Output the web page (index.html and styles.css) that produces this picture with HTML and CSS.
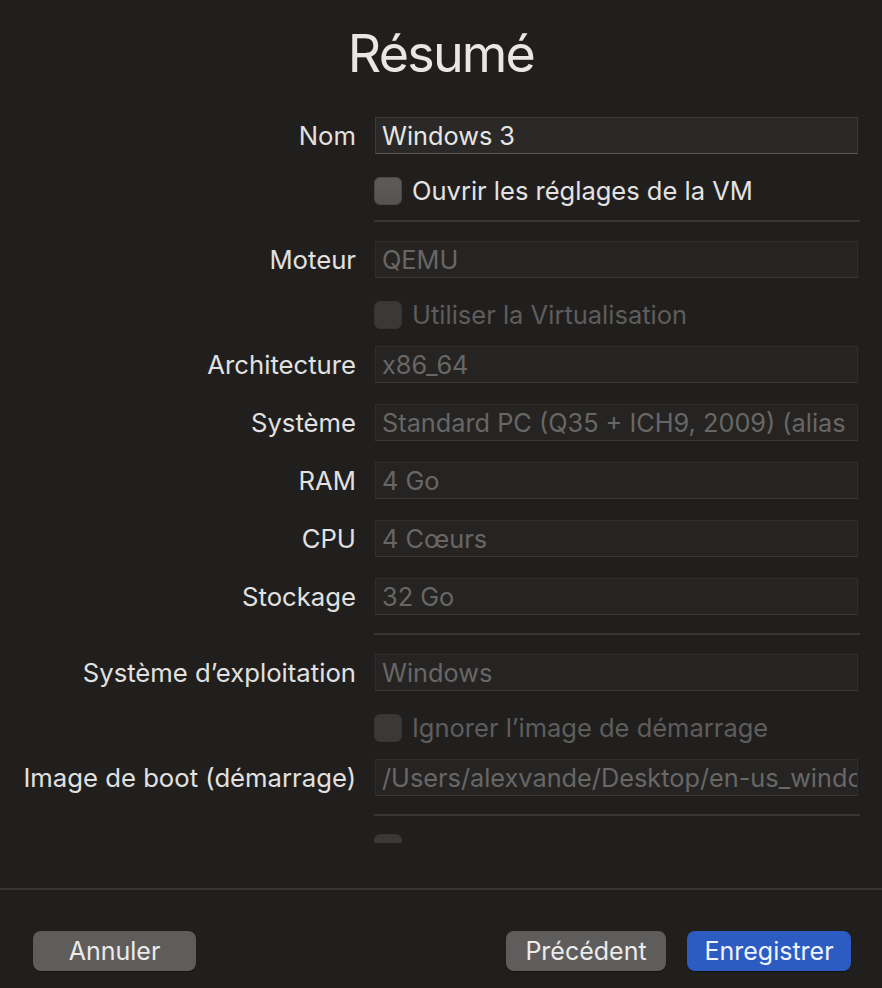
FILE: index.html
```html
<!DOCTYPE html>
<html lang="fr">
<head>
<meta charset="utf-8">
<link rel="stylesheet" href="styles.css">
</head>
<body>
<div class="window">
  <header class="header"><h1 class="title">Résumé</h1></header>
  <div class="content">
    <div class="form">
      <div class="row field-row">
        <div class="label">Nom</div>
        <div class="field editable">Windows 3</div>
      </div>
      <div class="row check-row">
        <div class="label"></div>
        <div class="check"><span class="box"></span><span class="check-text">Ouvrir les réglages de la VM</span></div>
      </div>
      <div class="row sep-row"><div></div><div class="sep"></div></div>
      <div class="row field-row">
        <div class="label">Moteur</div>
        <div class="field">QEMU</div>
      </div>
      <div class="row check-row">
        <div class="label"></div>
        <div class="check disabled"><span class="box"></span><span class="check-text">Utiliser la Virtualisation</span></div>
      </div>
      <div class="row field-row">
        <div class="label">Architecture</div>
        <div class="field">x86_64</div>
      </div>
      <div class="row field-row">
        <div class="label">Système</div>
        <div class="field">Standard PC (Q35 + ICH9, 2009) (alias</div>
      </div>
      <div class="row field-row">
        <div class="label">RAM</div>
        <div class="field">4 Go</div>
      </div>
      <div class="row field-row">
        <div class="label">CPU</div>
        <div class="field">4 Cœurs</div>
      </div>
      <div class="row field-row">
        <div class="label">Stockage</div>
        <div class="field">32 Go</div>
      </div>
      <div class="row sep-row"><div></div><div class="sep"></div></div>
      <div class="row field-row">
        <div class="label">Système d’exploitation</div>
        <div class="field">Windows</div>
      </div>
      <div class="row check-row">
        <div class="label"></div>
        <div class="check disabled"><span class="box"></span><span class="check-text">Ignorer l’image de démarrage</span></div>
      </div>
      <div class="row field-row">
        <div class="label">Image de boot (démarrage)</div>
        <div class="field">/Users/alexvande/Desktop/en-us_windo</div>
      </div>
      <div class="row sep-row"><div></div><div class="sep"></div></div>
      <div class="row check-row">
        <div class="label"></div>
        <div class="check disabled"><span class="box"></span></div>
      </div>
    </div>
  </div>
  <footer class="footer">
    <button class="btn">Annuler</button>
    <div class="btn-group">
      <button class="btn">Précédent</button>
      <button class="btn primary">Enregistrer</button>
    </div>
  </footer>
</div>
</body>
</html>
```
FILE: styles.css
```css
html, body {
  margin: 0;
  padding: 0;
  background: #201f1e;
}
body {
  font-family: Inter, "Noto Sans", "Liberation Sans", sans-serif;
  color: #e4e3e2;
  width: 882px;
  height: 988px;
  overflow: hidden;
}
.window {
  display: flex;
  flex-direction: column;
  height: 988px;
}
.header {
  height: 100px;
  display: flex;
  justify-content: center;
}
.title {
  margin: 22px 0 0 0;
  font-size: 52px;
  font-weight: 400;
  line-height: 64px;
  color: #e8e7e6;
  letter-spacing: -1.8px;
}
.content {
  height: 743px;
  overflow: hidden;
}
.form {
  display: flex;
  flex-direction: column;
  padding-top: 17px;
}
.row {
  display: grid;
  grid-template-columns: 356px 484px;
  column-gap: 18px;
  align-items: center;
}
.field-row { height: 37px; }
.check-row { height: 28px; }
.sep-row { height: 2px; }
.field-row + .field-row { margin-top: 21px; }
.field-row + .check-row { margin-top: 21px; }
.check-row + .field-row { margin-top: 19px; }
.check-row + .sep-row { margin-top: 17px; }
.field-row + .sep-row { margin-top: 18px; }
.sep-row + .field-row { margin-top: 19px; }
.sep-row + .check-row { margin-top: 18px; }
.label {
  text-align: right;
  font-size: 25.7px;
  color: #e2e1e0;
  white-space: nowrap;
}
.field {
  height: 37px;
  box-sizing: border-box;
  padding: 0 6px;
  font-size: 25.3px;
  line-height: 35px;
  white-space: nowrap;
  overflow: hidden;
  color: #686766;
  background: #252423;
  border: 1px solid #2f2e2d;
  border-bottom-color: #393837;
  margin-left: 1px;
}
.field.editable {
  color: #e6e5e4;
  background: #2a2928;
  border-color: #3b3a39;
  border-bottom-color: #585756;
}
.check {
  display: flex;
  align-items: center;
  gap: 10px;
  font-size: 25.5px;
  color: #e4e3e2;
}
.box {
  width: 28px;
  height: 28px;
  box-sizing: border-box;
  border-radius: 6px;
  background: linear-gradient(#5c5b5a, #555453);
  border: 1px solid #4a4948;
}
.check.disabled { color: #5e5d5c; }
.check.disabled .box {
  background: #3a3938;
  border-color: #353433;
}
.sep {
  height: 2px;
  background: #383736;
  margin-right: -2px;
}
.footer {
  margin-top: 45px;
  border-top: 2px solid #363534;
  padding: 41px 31px 0 33px;
  display: flex;
  justify-content: space-between;
  align-items: flex-start;
}
.btn-group {
  display: flex;
  gap: 21px;
}
.btn {
  height: 40px;
  border: none;
  border-radius: 8px;
  background: #5e5d5c;
  color: #ecebea;
  font-family: Inter, "Noto Sans", "Liberation Sans", sans-serif;
  font-size: 25px;
  padding: 0;
  width: 163px;
  line-height: 40px;
  box-shadow: 0 1px 1px rgba(0,0,0,0.4);
}
.btn-group .btn { width: 160px; }
.btn-group .btn.primary {
  width: 164px;
  background: #2c5bc2;
  color: #f0f3ff;
}
```
